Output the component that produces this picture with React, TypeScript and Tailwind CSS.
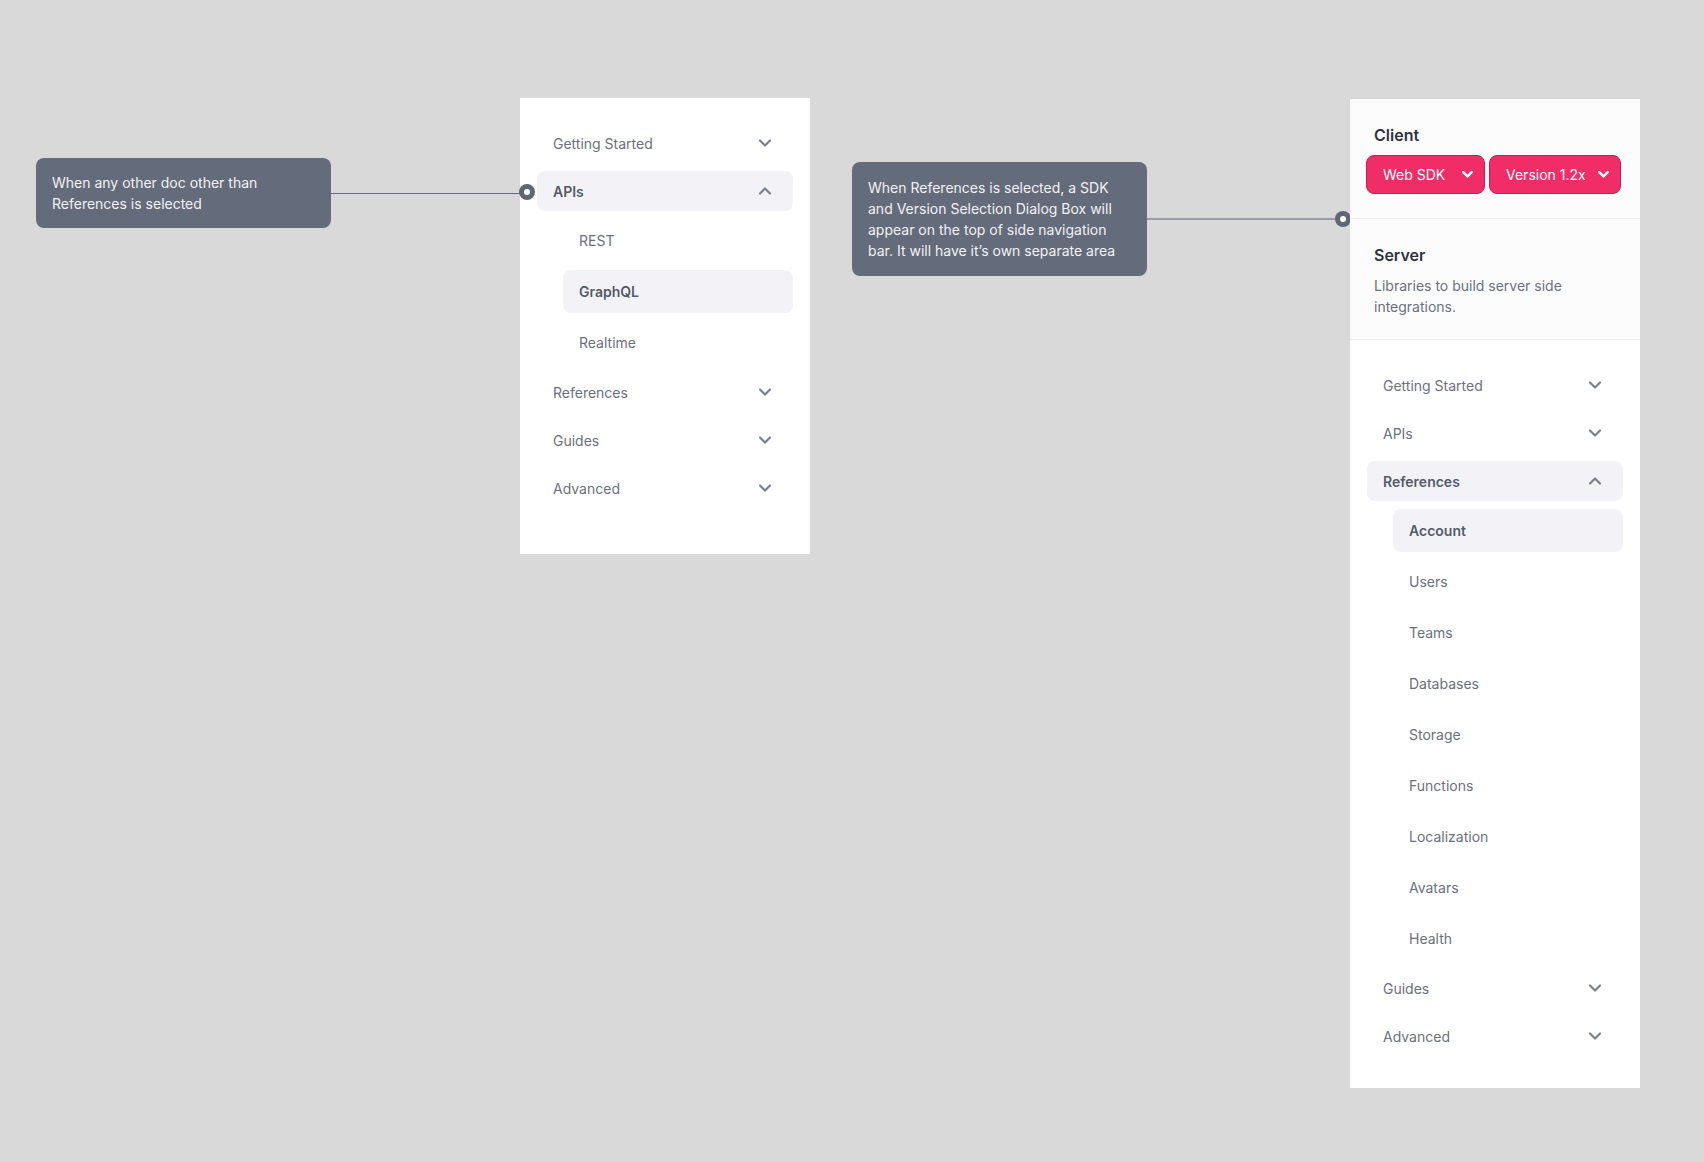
import React from "react";

type NavItem = {
  label: string;
  open?: boolean;
  children?: { label: string; active?: boolean }[];
};

const leftNav: NavItem[] = [
  { label: "Getting Started" },
  {
    label: "APIs",
    open: true,
    children: [{ label: "REST" }, { label: "GraphQL", active: true }, { label: "Realtime" }],
  },
  { label: "References" },
  { label: "Guides" },
  { label: "Advanced" },
];

const rightNav: NavItem[] = [
  { label: "Getting Started" },
  { label: "APIs" },
  {
    label: "References",
    open: true,
    children: [
      { label: "Account", active: true },
      { label: "Users" },
      { label: "Teams" },
      { label: "Databases" },
      { label: "Storage" },
      { label: "Functions" },
      { label: "Localization" },
      { label: "Avatars" },
      { label: "Health" },
    ],
  },
  { label: "Guides" },
  { label: "Advanced" },
];

function Chevron({ up = false, className = "" }: { up?: boolean; className?: string }) {
  return (
    <svg
      viewBox="0 0 16 16"
      className={className}
      fill="none"
      stroke="currentColor"
      strokeWidth={2.2}
      strokeLinecap="round"
      strokeLinejoin="round"
    >
      {up ? <path d="M3 10.5l5-5 5 5" /> : <path d="M3 5.5l5 5 5-5" />}
    </svg>
  );
}

function Dot() {
  return (
    <div className="flex h-4 w-4 shrink-0 items-center justify-center rounded-full bg-[#5f6677]">
      <div className="h-[6px] w-[6px] rounded-full bg-white" />
    </div>
  );
}

function Nav({ items }: { items: NavItem[] }) {
  return (
    <div className="flex flex-col gap-2">
      {items.map((item) => (
        <React.Fragment key={item.label}>
          <div
            className={`flex h-10 items-center justify-between rounded-lg pl-4 pr-[20px] text-[14px] ${
              item.open ? "bg-[#f3f3f7] font-semibold text-[#555b69]" : "text-[#6b7080]"
            }`}
          >
            <span>{item.label}</span>
            <Chevron up={item.open} className="h-4 w-4 text-[#7b8091]" />
          </div>
          {item.children?.map((child) => (
            <div
              key={child.label}
              className={`ml-[26px] flex h-[43px] items-center rounded-lg px-4 text-[14px] ${
                child.active ? "bg-[#f3f3f7] font-semibold text-[#555b69]" : "text-[#6b7080]"
              }`}
            >
              {child.label}
            </div>
          ))}
        </React.Fragment>
      ))}
    </div>
  );
}

function Tooltip({ lines, className = "" }: { lines: string[]; className?: string }) {
  return (
    <div
      className={`w-[295px] shrink-0 rounded-lg bg-[#646b7b] px-4 text-[14px] leading-[21px] text-[#f1f2f5] ${className}`}
    >
      {lines.map((l) => (
        <div key={l} className="whitespace-nowrap">
          {l}
        </div>
      ))}
    </div>
  );
}

function SelectButton({ label, width }: { label: string; width: string }) {
  return (
    <button
      className={`${width} flex h-[39px] items-center justify-between rounded-lg border border-[#c91c53] bg-[#f02d67] pl-4 pr-[9px] text-[14px] text-white`}
    >
      <span>{label}</span>
      <svg
        viewBox="0 0 16 16"
        className="h-[15px] w-[15px]"
        fill="none"
        stroke="currentColor"
        strokeWidth={2.6}
        strokeLinecap="round"
        strokeLinejoin="round"
      >
        <path d="M3.5 5.5l4.5 4.5 4.5-4.5" />
      </svg>
    </button>
  );
}

export default function App() {
  return (
    <div
      className="flex min-h-screen w-full items-start bg-[#d9d9d9] pl-[36px] pt-[98px]"
      style={{ fontFamily: "Inter, 'Noto Sans', sans-serif" }}
    >
      {/* first annotation */}
      <div className="mt-[60px] flex items-center">
        <Tooltip
          className="py-[14px]"
          lines={["When any other doc other than", "References is selected"]}
        />
        <div className="h-px w-[189px] bg-[#646b7b]" />
      </div>

      {/* default side nav */}
      <div className="relative w-[290px] shrink-0 bg-white px-[17px] pb-[46px] pt-[25px]">
        <div className="absolute left-[-1px] top-[86px]">
          <Dot />
        </div>
        <Nav items={leftNav} />
      </div>

      {/* second annotation */}
      <div className="ml-[42px] mt-[64px] flex items-center">
        <Tooltip
          className="py-[15px]"
          lines={[
            "When References is selected, a SDK",
            "and Version Selection Dialog Box will",
            "appear on the top of side navigation",
            "bar. It will have it’s own separate area",
          ]}
        />
        <div className="h-[2px] w-[188px] bg-[#9a9ea8]" />
        <Dot />
      </div>

      {/* references side nav */}
      <div className="-ml-px mt-px w-[290px] shrink-0 bg-white">
        <div className="border-b border-[#eef0f4] bg-[#fcfcfd] px-4 py-6">
          <div className="pl-2 text-[16px] font-semibold leading-6 text-[#2d3340]">Client</div>
          <div className="mt-2 flex gap-[4px]">
            <SelectButton label="Web SDK" width="w-[119px]" />
            <SelectButton label="Version 1.2x" width="w-[132px]" />
          </div>
        </div>
        <div className="border-b border-[#eef0f4] bg-[#fcfcfd] px-6 pb-[22px] pt-6">
          <div className="text-[16px] font-semibold leading-6 text-[#2d3340]">Server</div>
          <div className="mt-2 text-[14px] leading-[21px] text-[#6b7080]">
            Libraries to build server side
            <br />
            integrations.
          </div>
        </div>
        <div className="px-[17px] pb-8 pt-[25px]">
          <Nav items={rightNav} />
        </div>
      </div>
    </div>
  );
}
